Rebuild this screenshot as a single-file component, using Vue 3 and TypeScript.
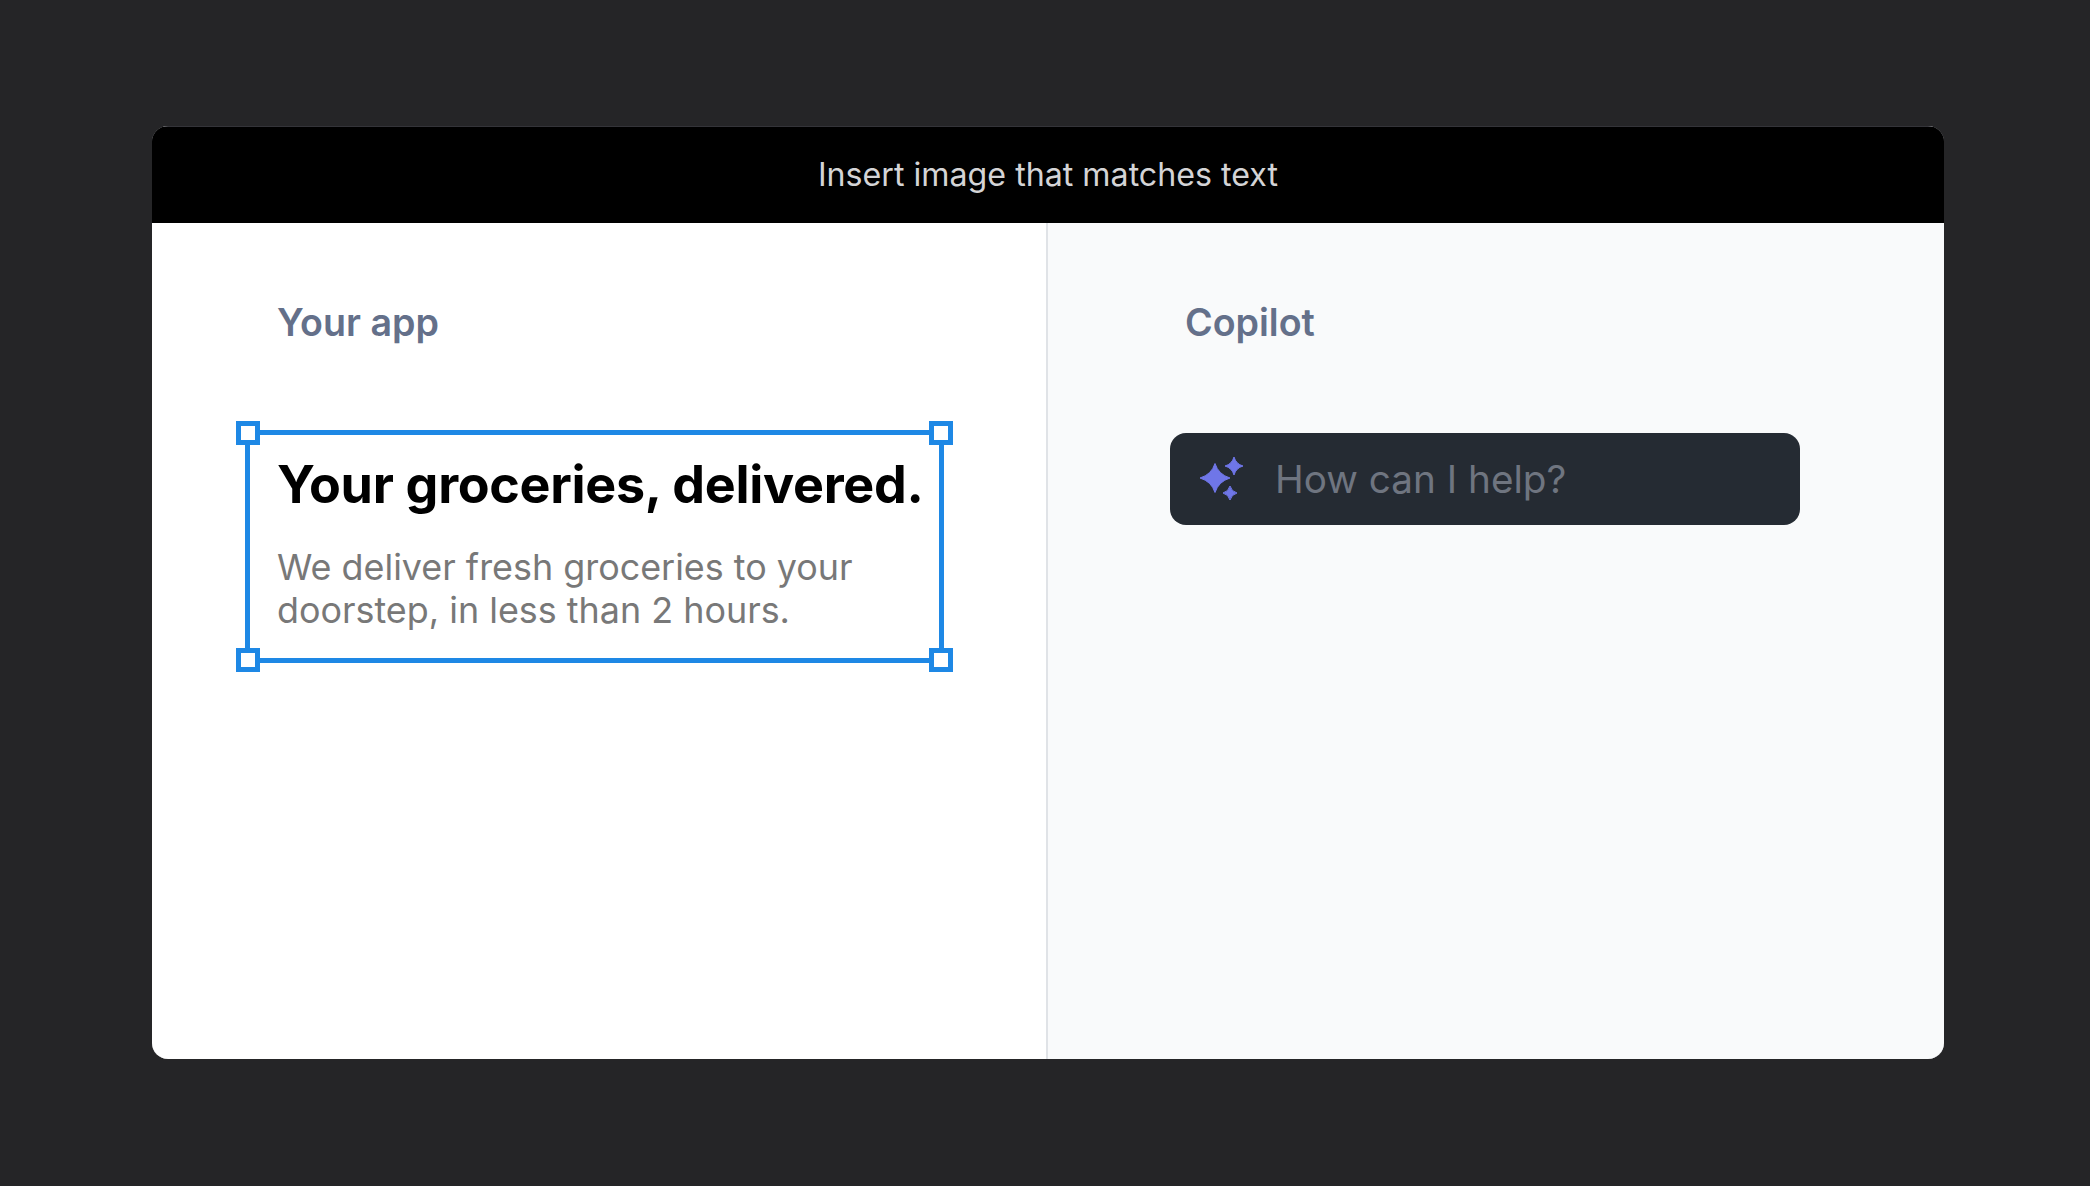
<script setup lang="ts">
const handles: string[] = ['tl', 'tr', 'bl', 'br']
</script>

<template>
  <div class="page">
    <div class="window">
      <header class="titlebar">Insert image that matches text</header>
      <div class="panes">
        <section class="pane app">
          <h2 class="label app-label">Your app</h2>
          <div class="selection">
            <span v-for="h in handles" :key="h" class="handle" :class="h"></span>
            <h1 class="headline">Your groceries, delivered.</h1>
            <p class="desc">We deliver fresh groceries to your doorstep, in less than 2 hours.</p>
          </div>
        </section>
        <section class="pane copilot">
          <h2 class="label copilot-label">Copilot</h2>
          <div class="prompt">
            <svg class="sparkle" width="48" height="48" viewBox="0 0 48 48" fill="#6f76e8" stroke="#6f76e8" stroke-width="1" stroke-linejoin="round">
              <path d="M18 8.500 Q21.500 19.500 33 23 Q21.500 26.500 18 37.500 Q14.500 26.500 3 23 Q14.500 19.500 18 8.500 Z" />
              <path d="M37 2 Q39 9 46 11 Q39 13 37 20 Q35 13 28 11 Q35 9 37 2 Z" />
              <path d="M33 31 Q34.500 36.500 40 38 Q34.500 39.500 33 45 Q31.500 39.500 26 38 Q31.500 36.500 33 31 Z" />
            </svg>
            <span class="prompt-text">How can I help?</span>
          </div>
        </section>
      </div>
    </div>
  </div>
</template>

<style>
html, body { margin: 0; background: #252527; }
</style>

<style scoped>
.page {
  width: 2090px;
  height: 1186px;
  box-sizing: border-box;
  padding: 126px 146px 127px 152px;
  background: #252527;
  font-family: Inter, "Liberation Sans", sans-serif;
}
.window {
  height: 933px;
  display: flex;
  flex-direction: column;
  border-radius: 16px;
  overflow: hidden;
  background: #fff;
  box-shadow: inset 0 0 0 1px #343439;
}
.titlebar {
  height: 96px;
  flex: none;
  margin-top: 1px;
  background: #000;
  color: #d4d4d6;
  font-size: 32.200px;
  line-height: 96px;
  text-align: center;
}
.panes {
  flex: 1;
  display: grid;
  grid-template-columns: 894px 1fr;
}
.pane {
  display: flex;
  flex-direction: column;
  align-items: flex-start;
}
.app {
  background: #fff;
  padding: 77px 0 0 125px;
}
.copilot {
  background: #f9fafb;
  border-left: 2px solid #e0e3e7;
  padding: 77px 0 0 137px;
}
.label {
  margin: 0;
  color: #64708a;
  font-size: 37.600px;
  line-height: 46px;
  font-weight: 600;
}
.selection {
  position: relative;
  box-sizing: border-box;
  width: 699px;
  height: 233px;
  margin: 84px 0 0 -32px;
  padding: 19px 0 0 27px;
  border: 5px solid #1e88e5;
}
.handle {
  position: absolute;
  box-sizing: border-box;
  width: 24px;
  height: 24px;
  background: #fff;
  border: 5px solid #1e88e5;
}
.tl { left: -14px; top: -14px; }
.tr { right: -14px; top: -14px; }
.bl { left: -14px; bottom: -14px; }
.br { right: -14px; bottom: -14px; }
.headline {
  margin: 0;
  color: #000;
  font-size: 52px;
  letter-spacing: -0.3px;
  line-height: 62px;
  font-weight: 700;
  white-space: nowrap;
}
.desc {
  margin: 30px 0 0;
  width: 640px;
  color: #787878;
  font-size: 35.900px;
  line-height: 43px;
}
.prompt {
  display: flex;
  align-items: center;
  box-sizing: border-box;
  width: 630px;
  height: 92px;
  margin: 87px 0 0 -15px;
  padding-left: 27px;
  border-radius: 16px;
  background: #252b33;
}
.sparkle {
  flex: none;
}
.prompt-text {
  margin-left: 30px;
  color: #6f7580;
  font-size: 38.700px;
  line-height: 46px;
}
</style>
